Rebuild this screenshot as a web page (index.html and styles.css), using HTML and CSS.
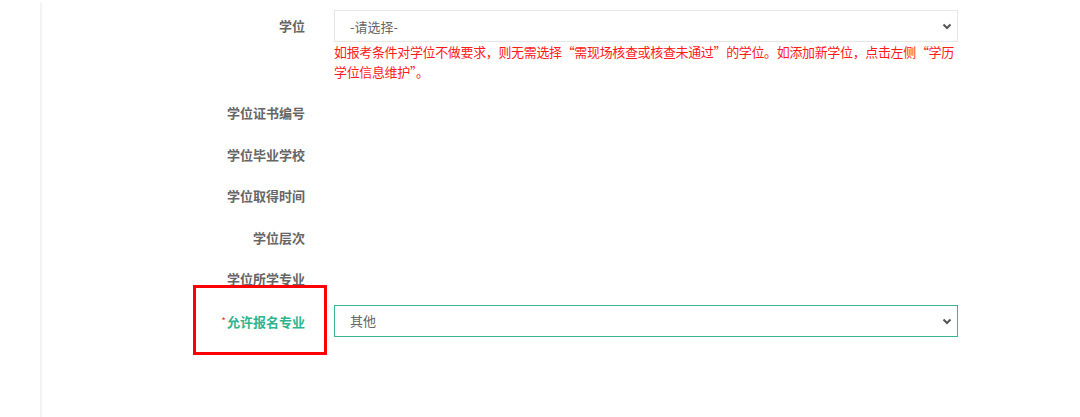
FILE: index.html
```html
<!DOCTYPE html>
<html lang="zh-CN">
<head>
    <meta charset="UTF-8">
    <title>学位信息</title>
    <link rel="stylesheet" href="styles.css">
</head>
<body>
    <div class="main">
        <form class="form">
            <!-- 学位 -->
            <div class="row row-first">
                <label class="label">学位</label>
                <div class="field">
                    <div class="select-wrap">
                        <select class="select">
                            <option>-请选择-</option>
                        </select>
                        <svg class="arrow" width="10" height="7" viewBox="0 0 10 7"><path d="M1.5 1.5 L5 5 L8.5 1.5" fill="none" stroke="#555" stroke-width="2"/></svg>
                    </div>
                    <p class="hint">如报考条件对学位不做要求，则无需选择“需现场核查或核查未通过”的学位。如添加新学位，点击左侧“学历学位信息维护”。</p>
                </div>
            </div>

            <div class="row"><label class="label">学位证书编号</label><div class="field"></div></div>
            <div class="row"><label class="label">学位毕业学校</label><div class="field"></div></div>
            <div class="row"><label class="label">学位取得时间</label><div class="field"></div></div>
            <div class="row"><label class="label">学位层次</label><div class="field"></div></div>
            <div class="row"><label class="label">学位所学专业</label><div class="field"></div></div>

            <!-- 允许报名专业 -->
            <div class="row">
                <label class="label label-active"><span class="req">*</span>允许报名专业</label>
                <div class="field">
                    <div class="select-wrap">
                        <select class="select select-active">
                            <option>其他</option>
                        </select>
                        <svg class="arrow" width="10" height="7" viewBox="0 0 10 7"><path d="M1.5 1.5 L5 5 L8.5 1.5" fill="none" stroke="#555" stroke-width="2"/></svg>
                    </div>
                </div>
            </div>
        </form>

        <div class="mark"></div>
    </div>
</body>
</html>
```

FILE: styles.css
```css
* {
    box-sizing: border-box;
    margin: 0;
    padding: 0;
}
body {
    background-color: #ffffff;
    font-family: "Noto Sans CJK SC", "Microsoft YaHei", sans-serif;
    font-size: 13px;
    color: #666;
}

/* Main panel */
.main {
    position: relative;
    margin: 3px 0 0 40px;
    min-height: 414px;
    border-left: 2px solid #f3f3f3;
}
.form {
    padding-top: 7px;
}

/* Rows */
.row {
    display: flex;
    margin-bottom: 9.6px;
    min-height: 32px;
}
.row-first {
    margin-bottom: 15px;
}
.label {
    width: 263px;
    text-align: right;
    line-height: 32px;
    font-weight: bold;
    color: #666;
}
.label-active {
    color: #2fb48e;
}
.req {
    color: #f33;
    font-size: 10px;
    font-weight: normal;
    vertical-align: 2px;
    margin-right: 1px;
}
.field {
    width: 624px;
    margin-left: 29px;
}

/* Select */
.select-wrap {
    position: relative;
}
.select {
    appearance: none;
    -webkit-appearance: none;
    width: 100%;
    height: 32px;
    padding: 0 15px;
    border: 1px solid #e6e6e6;
    background-color: #fff;
    font-family: inherit;
    font-size: 13px;
    color: #666;
    outline: none;
}
.select-active {
    border-color: #3cb393;
}
.arrow {
    position: absolute;
    right: 6px;
    top: 13px;
}

/* Hint */
.hint {
    color: #ff1a1a;
    line-height: 20px;
    letter-spacing: -0.35px;
}

/* Highlight box */
.mark {
    position: absolute;
    left: 151px;
    top: 282px;
    width: 134px;
    height: 70px;
    border: 3px solid #ff0000;
}
```
